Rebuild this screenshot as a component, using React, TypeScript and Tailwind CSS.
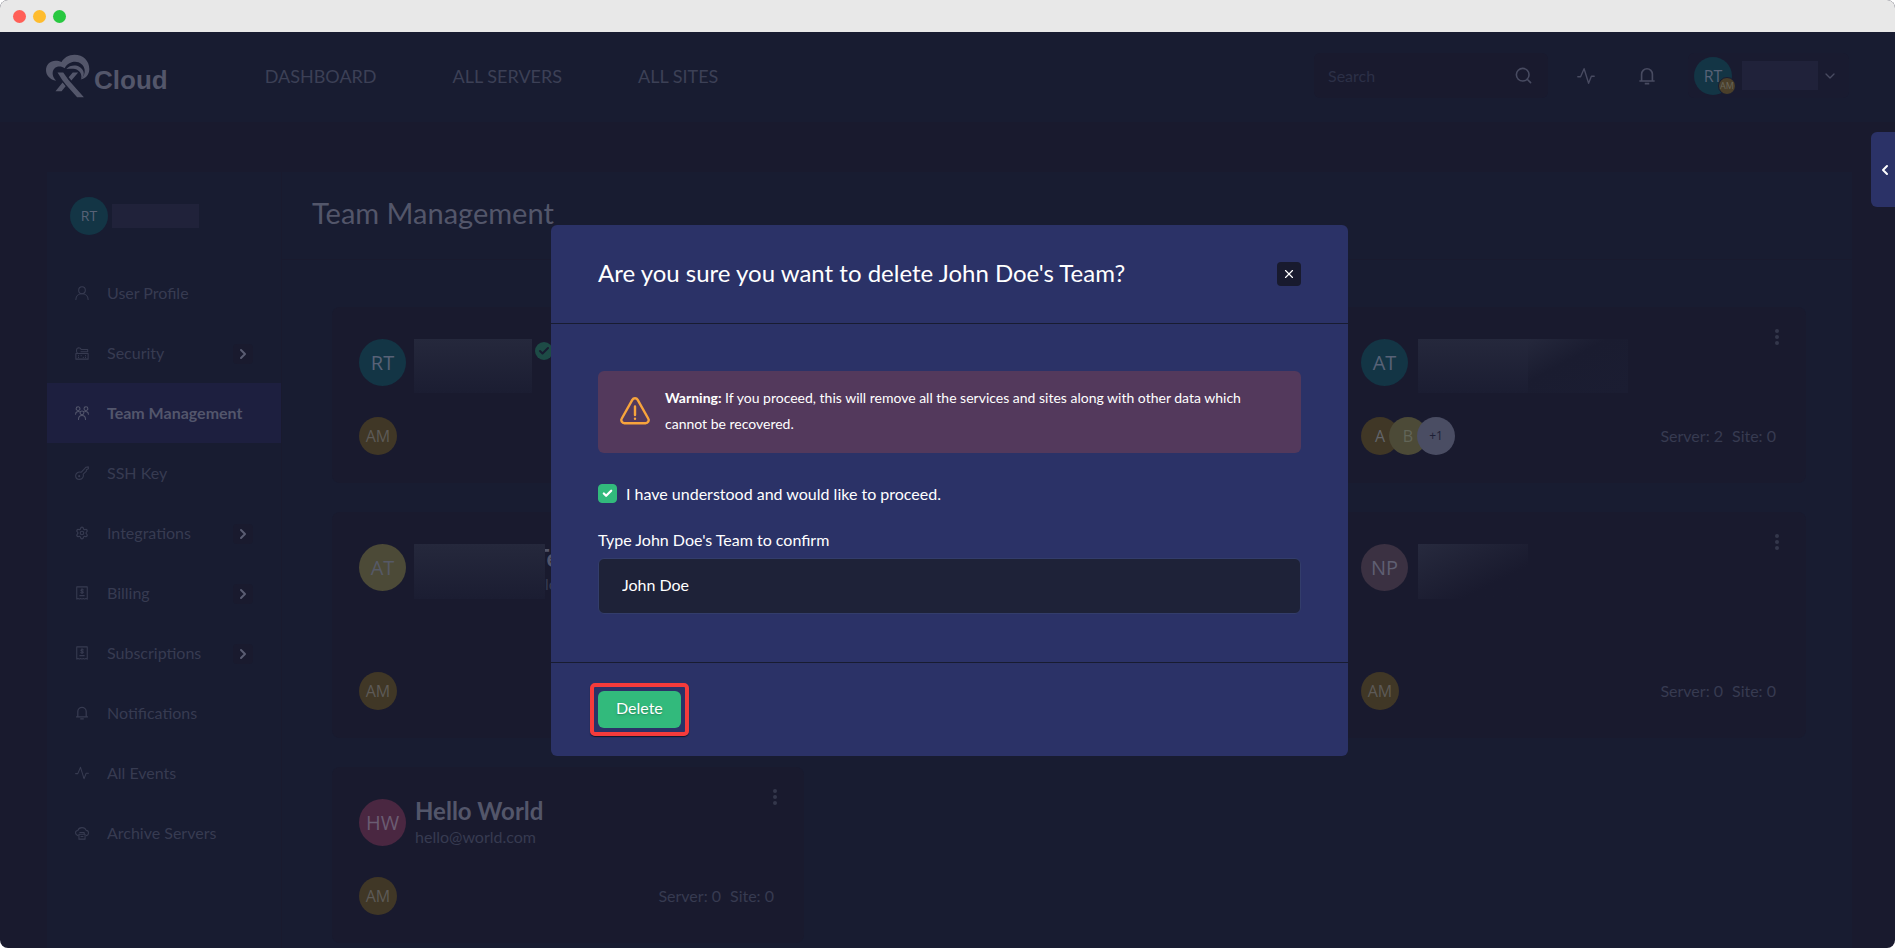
import type { ReactNode } from "react";
import { Bell, Check, ChevronDown, ChevronLeft, ChevronRight, Search, Settings, X } from "lucide-react";

type IconProps = { className?: string };

function Svg({ className, children }: IconProps & { children: ReactNode }) {
  return (
    <svg viewBox="0 0 16 16" className={className} fill="none" stroke="currentColor" strokeWidth="1.2" strokeLinecap="round" strokeLinejoin="round" aria-hidden="true">
      {children}
    </svg>
  );
}

function UserIcon({ className }: IconProps) {
  return (
    <Svg className={className}>
      <ellipse cx="8" cy="4.8" rx="3.8" ry="4" />
      <path d="M1 15.4c0-4 3-6.6 7-6.6s7 2.6 7 6.6" />
    </Svg>
  );
}

function SecurityIcon({ className }: IconProps) {
  return (
    <Svg className={className}>
      <path d="M1 8.500h14v6.500H1z" />
      <path d="M3 8.500C1 7 1.200 2.200 4 2c2 0 2.800 1 3.100 2H14.500v2.500H6.800" />
      <path d="M4 10.800v.4M4 12.800v.2M7 10.800v.4M9.500 12.800v.2M12 10.800v.4M12 12.800v.2" />
    </Svg>
  );
}

function TeamIcon({ className }: IconProps) {
  return (
    <Svg className={className}>
      <circle cx="3.500" cy="3" r="2.200" />
      <circle cx="12.500" cy="3" r="2.200" />
      <circle cx="8" cy="7.800" r="2.200" />
      <path d="M.7 9.500C.7 7 2.500 6 5 6.500M15.300 9.500c0-2.500-1.800-3.500-4.300-3" />
      <path d="M4 15.300c0-3 1.500-4.500 4-4.500s4 1.500 4 4.500" />
    </Svg>
  );
}

function KeyIcon({ className }: IconProps) {
  return (
    <Svg className={className}>
      <path d="M7 7.200 12.600 1.400 15.300 1v2.200L13 4.200v1.600L9.400 9.200c.9 3-1 6.100-4.300 6.100-2.500 0-4.400-1.900-4.400-4.200C.7 8.300 3.800 6 7 7.200Z" />
      <circle cx="4.800" cy="11.600" r=".6" />
    </Svg>
  );
}

function BillIcon({ className }: IconProps) {
  return (
    <Svg className={className}>
      <path d="M2 1h12v14l-1.500-.8-1.500.8-1.500-.8L8 15l-1.500-.8L5 15l-1.500-.8L2 15z" />
      <path d="M9.500 4.400C8.800 3.700 6.700 3.800 6.700 5c0 1.300 2.800.8 2.800 2.200 0 1.100-2 1.200-2.900.4M8 3v5.500M5.500 11h5" />
    </Svg>
  );
}

function PulseIcon({ className }: IconProps) {
  return (
    <Svg className={className}>
      <path d="M.7 8.700h2.500L6.300 1.500l4 13 2.500-6.300h2.500" />
    </Svg>
  );
}

function BellOutline({ className }: IconProps) {
  return (
    <svg viewBox="0 0 20 20" className={className} fill="none" stroke="currentColor" strokeWidth="1.8" aria-hidden="true">
      <path d="M4 15.500V8a6 6 0 0 1 12 0v7.500M1.500 15.500h17M7.500 18.500h5" />
    </svg>
  );
}

function ArchiveIcon({ className }: IconProps) {
  return (
    <Svg className={className}>
      <path d="M3.500 11C-.5 10 0 5.300 3.200 5.200 4.500.8 11.200.7 12.700 5c3.500.2 3.600 5.200.3 6" />
      <path d="M4.500 9.500h7v5.500h-7zM5.500 7.500h5v2M6.800 12h2.400" />
    </Svg>
  );
}

function Logo() {
  return (
    <a href="#" className="flex items-end text-[#53566a]">
      <svg viewBox="20 34 130 130" className="h-11 w-11" fill="currentColor" aria-hidden="true">
        <path d="M50 113C32 110 20 97 20 82c0-17 13-28 28-28 7 0 12 1 18 4 6-13 21-22 38-22 26 0 44 18 44 42 0 16-10 28-26 31 10-8 14-19 12-29-3-16-18-26-36-22-11 3-18 9-23 18-9-6-22-7-30 1-9 10-6 26 5 36Z" />
        <path d="M80 78c14-16 42-13 50 6 4 10 0 18-6 23 2-10-1-19-9-24-9-7-20-5-35-5Z" />
        <path d="M54 89h17l15 21 46 52h-20L79 125 68 111Z" />
        <path d="M99 89h16L95 112l-8-9ZM69 118l9 11-12 15H48Z" />
      </svg>
      <span className="pl-1 pb-0.5 font-['Liberation_Sans',sans-serif] text-[26px] leading-8 font-bold">Cloud</span>
    </a>
  );
}

const navItems = ["DASHBOARD", "ALL SERVERS", "ALL SITES"];

function Header() {
  return (
    <header className="flex h-[90px] items-center bg-[#181c31] pr-[46px] pb-[3px] pl-[46px]">
      <Logo />
      <nav className="ml-[97px] flex gap-[76px] text-lg text-[#3c4056]">
        {navItems.map((n) => (
          <a key={n} href="#">{n}</a>
        ))}
      </nav>
      <div className="ml-auto flex h-[45px] w-[234px] items-center rounded-md bg-[#191a2e] pr-[15px] pl-[14px]">
        <input type="search" aria-label="Search" placeholder="Search" className="min-w-0 flex-1 bg-transparent text-base text-[#2c3047] outline-none placeholder:text-[#2c3047]" />
        <button type="button" aria-label="Submit search" className="text-[#484b61]">
          <Search className="size-[19px]" />
        </button>
      </div>
      <button type="button" aria-label="Activity" className="ml-[29px] text-[#484b61]">
        <PulseIcon className="size-[18px]" />
      </button>
      <button type="button" aria-label="Notifications" className="ml-[43px] text-[#484b61]">
        <BellOutline className="size-[18px]" />
      </button>
      <button type="button" aria-label="Account menu" className="ml-8 flex h-[45px] items-center rounded-md bg-[#191b30] pr-[11px] pl-[6px] text-[#484b61]">
        <span className="relative">
          <Avatar text="RT" className="size-[38px] bg-[#133545] text-base text-[#586277]" />
          <Avatar text="AM" className="absolute -right-1 bottom-0 size-[18px] border border-[#181c31] bg-[#4a3f2a] text-[9px] text-[#69665a]" />
        </span>
        <span className="ml-[10px] h-[29px] w-[76px] bg-[#20223a]" />
        <ChevronDown className="ml-1 size-4" />
      </button>
    </header>
  );
}

function Avatar({ text, className }: { text: string; className: string }) {
  return (
    <span className={`flex shrink-0 items-center justify-center rounded-full font-['Open_Sans',sans-serif] ${className}`}>{text}</span>
  );
}

const menu: { label: string; icon: (p: IconProps) => ReactNode; more?: boolean; active?: boolean }[] = [
  { label: "User Profile", icon: UserIcon },
  { label: "Security", icon: SecurityIcon, more: true },
  { label: "Team Management", icon: TeamIcon, active: true },
  { label: "SSH Key", icon: KeyIcon },
  { label: "Integrations", icon: (p) => <Settings {...p} />, more: true },
  { label: "Billing", icon: BillIcon, more: true },
  { label: "Subscriptions", icon: BillIcon, more: true },
  { label: "Notifications", icon: BellOutline },
  { label: "All Events", icon: PulseIcon },
  { label: "Archive Servers", icon: ArchiveIcon },
];

function Sidebar() {
  return (
    <aside className="w-[235px] shrink-0 border-r border-[#191a2e]">
      <div className="flex h-[91px] items-center gap-1 pb-[3px] pl-[23px]">
        <Avatar text="RT" className="size-[38px] bg-[#133545] text-sm text-[#586277]" />
        <span className="h-6 w-[87px] bg-[#20223a]" />
      </div>
      <ul>
        {menu.map(({ label, icon: Icon, more, active }) => (
          <li key={label}>
            <a href="#" className={`flex h-[60px] items-center px-7 text-base ${active ? "bg-[#1d1f3f] font-bold text-[#53566c]" : "text-[#373b51]"}`}>
              <Icon className="size-[14px]" />
              <span className="ml-[18px]">{label}</span>
              {more && (
                <span className="mt-0.5 ml-auto flex size-5 items-center justify-center rounded bg-[#191a2e] text-[#5a5d72]">
                  <ChevronRight className="size-4" strokeWidth={3} />
                </span>
              )}
            </a>
          </li>
        ))}
      </ul>
    </aside>
  );
}

type Member = { text: string; className: string };

type Team = {
  initials: string;
  color: string;
  head: ReactNode;
  members: Member[];
  servers?: number;
  tall?: boolean;
};

const gold: Member = { text: "AM", className: "bg-[#403726] text-[#5d5a57]" };

const teams: (Team | null)[] = [
  {
    initials: "RT",
    color: "bg-[#133545] text-[#586277]",
    head: (
      <span className="flex items-start self-start">
        <span className="h-[54px] w-[118px] bg-linear-to-b from-[#25283c] to-[#1b1d32]" />
        <span className="mt-[3px] ml-[3px] flex size-[18px] items-center justify-center rounded-full bg-[#1d4b46] text-[#181c31]">
          <Check className="size-3" strokeWidth={4} />
        </span>
      </span>
    ),
    members: [gold],
  },
  null,
  {
    initials: "AT",
    color: "bg-[#133545] text-[#586277]",
    head: (
      <span className="ml-0.5 flex self-start">
        <span className="h-[54px] w-[110px] bg-linear-to-b from-[#25283c] to-[#1b1d32]" />
        <span className="h-[54px] w-[100px] bg-linear-to-br from-[#25283c] via-[#1a1c30] via-40% to-[#1b1d32]" />
      </span>
    ),
    members: [
      { text: "A", className: "bg-[#403726] text-[#63656a]" },
      { text: "B", className: "-ml-[10px] bg-[#4c4a37] text-[#626558]" },
      { text: "+1", className: "-ml-[10px] bg-[#4a4d63] text-xs text-[#1d2036]" },
    ],
    servers: 2,
  },
  {
    initials: "AT",
    color: "bg-[#4c4a37] text-[#565966]",
    head: (
      <span className="flex self-start">
        <span className="z-10 h-[55px] w-[131px] shrink-0 bg-linear-to-b from-[#25283c] to-[#1b1d32]" />
        <span className="-ml-[10px] flex flex-col">
          <span className="text-2xl leading-7 font-bold text-[#53566a]">Te</span>
          <span className="pl-[10px] text-base text-[#373b51]">lo</span>
        </span>
      </span>
    ),
    members: [gold],
    tall: true,
  },
  null,
  {
    initials: "NP",
    color: "bg-[#3b3142] text-[#5f5f72]",
    head: <span className="ml-0.5 h-[55px] w-[110px] self-start bg-linear-to-br from-[#272a3e] to-[#191a2e] to-70%" />,
    members: [gold],
    servers: 0,
    tall: true,
  },
  {
    initials: "HW",
    color: "bg-[#4a2741] text-[#6a5c72]",
    head: (
      <span className="ml-px flex flex-col">
        <span className="text-2xl leading-7 font-bold text-[#53566a]">Hello World</span>
        <span className="text-base leading-6 text-[#373b51]">hello@world.com</span>
      </span>
    ),
    members: [gold],
    servers: 0,
  },
];

function TeamCard({ team }: { team: Team }) {
  return (
    <article className="flex flex-col rounded-lg bg-[#191a2e] pt-8 pr-[30px] pb-7 pl-[27px]">
      <div className={`flex h-[47px] items-center gap-2 ${team.tall ? "mb-[81px]" : "mb-[31px]"}`}>
        <Avatar text={team.initials} className={`size-[47px] text-xl ${team.color}`} />
        {team.head}
        <button type="button" aria-label="Team options" className="-mt-[10px] -mr-[3px] ml-auto flex flex-col gap-[2px] self-start p-0">
          <span className="size-1 rounded-full bg-[#34374b]" />
          <span className="size-1 rounded-full bg-[#34374b]" />
          <span className="size-1 rounded-full bg-[#34374b]" />
        </button>
      </div>
      <div className="flex items-center">
        {team.members.map((m) => (
          <Avatar key={m.text} text={m.text} className={`size-[38px] ${m.className}`} />
        ))}
        {team.servers !== undefined && (
          <span className="ml-auto flex gap-[9px] text-base text-[#373b51]">
            <span>Server: {team.servers}</span>
            <span>Site: 0</span>
          </span>
        )}
      </div>
    </article>
  );
}

function WarningIcon() {
  return (
    <svg viewBox="0 0 30 28" className="h-7 w-[30px] shrink-0" fill="none" stroke="#f8a43c" strokeWidth="2.400" strokeLinecap="round" strokeLinejoin="round" aria-hidden="true">
      <path d="M12.300 2.800a3.100 3.100 0 0 1 5.400 0l10.500 18.700a3.100 3.100 0 0 1-2.700 4.700H4.500a3.100 3.100 0 0 1-2.700-4.700z" />
      <path d="M15 9.500v8.500M15 21.600v.2" />
    </svg>
  );
}

function DeleteModal() {
  return (
    <div className="absolute inset-x-0 top-8 bottom-0 flex items-center justify-center pl-1">
      <div role="dialog" aria-modal="true" aria-labelledby="dialog-title" className="w-full max-w-[797px] rounded-md bg-[#2b3267] text-white">
        <div className="flex h-[99px] items-center justify-between border-b border-[#181c31] px-[47px]">
          <h2 id="dialog-title" className="pb-0.5 text-2xl">Are you sure you want to delete John Doe's Team?</h2>
          <button type="button" aria-label="Close" className="flex size-6 items-center justify-center rounded bg-[#181a2e]">
            <X className="size-[14px]" />
          </button>
        </div>
        <div className="px-[47px] pt-[47px] pb-12">
          <div className="flex items-center gap-[15px] rounded-md bg-[#53395c] pt-[14px] pr-10 pb-4 pl-[22px]">
            <WarningIcon />
            <p className="text-sm leading-[26px]">
              <strong>Warning:</strong>
              <span> If you proceed, this will remove all the services and sites along with other data which cannot be recovered.</span>
            </p>
          </div>
          <div className="mt-[31px] flex h-5 items-center">
            <span className="relative flex size-[19px]">
              <input id="understood" type="checkbox" defaultChecked className="peer size-[19px] appearance-none rounded border border-[#32ba7c] checked:bg-[#32ba7c]" />
              <Check className="pointer-events-none absolute inset-1 hidden size-[11px] peer-checked:block" strokeWidth={5} />
            </span>
            <label htmlFor="understood" className="pl-[9px] text-base">I have understood and would like to proceed.</label>
          </div>
          <label htmlFor="confirm" className="mt-6 block text-base">Type John Doe's Team to confirm</label>
          <input id="confirm" type="text" defaultValue="John Doe" className="mt-[6px] h-[56px] w-full rounded-md border border-[#333d6b] bg-[#1e2238] px-[23px] pb-0.5 text-base outline-none" />
        </div>
        <div className="border-t border-[#181c31] px-[47px] py-7">
          <div className="relative inline-flex">
            <button type="button" className="h-[37px] rounded-md bg-[#32ba7c] px-[18px] pb-0.5 text-base text-shadow-md">Delete</button>
            <span className="pointer-events-none absolute -inset-2 rounded-[5px] border-4 border-[#f53b3b] shadow-[0_1px_1px_#111428]" />
          </div>
        </div>
      </div>
    </div>
  );
}

export default function App() {
  return (
    <div className="relative flex min-h-screen flex-col overflow-hidden rounded-lg bg-[#191a2e] font-['Lato',sans-serif]">
      <div className="flex h-8 items-center gap-[7px] bg-[#e8e8e8] pt-px pl-[13px]">
        <span className="size-[13px] rounded-full bg-[#ff5f57]" />
        <span className="size-[13px] rounded-full bg-[#febc2e]" />
        <span className="size-[13px] rounded-full bg-[#28c840]" />
      </div>
      <Header />
      <main className="mt-[50px] mr-[43px] ml-[47px] flex flex-1 bg-[#181c31]">
        <Sidebar />
        <section className="min-w-0 flex-1">
          <div className="flex h-[88px] items-center border-b border-[#191a2e] pb-[5px] pl-[30px]">
            <h1 className="text-[29px] text-[#53566a]">Team Management</h1>
          </div>
          <div className="grid grid-cols-3 gap-x-[29px] gap-y-[29px] pt-[47px] pr-[46px] pb-1 pl-[50px]">
            {teams.map((t, i) =>
              t ? <TeamCard key={i} team={t} /> : <div key={i} className="rounded-lg bg-[#191a2e]" />,
            )}
          </div>
        </section>
      </main>
      <button type="button" aria-label="Open panel" className="absolute top-[132px] right-0 flex h-[75px] w-6 items-center justify-center rounded-l-md bg-[#2b3267] pl-1 text-white">
        <ChevronLeft className="size-4" strokeWidth={3} />
      </button>
      <DeleteModal />
    </div>
  );
}
